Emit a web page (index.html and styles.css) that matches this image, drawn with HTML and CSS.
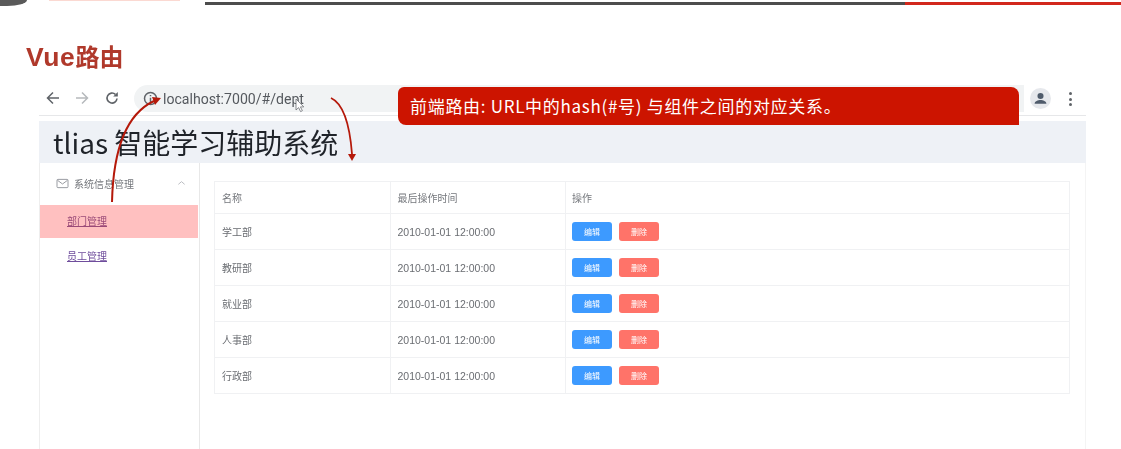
FILE: index.html
```html
<!DOCTYPE html>
<html lang="zh-CN">
<head>
    <meta charset="UTF-8">
    <title>Vue路由</title>
    <link rel="stylesheet" href="styles.css">
</head>
<body>
    <div class="top-strip">
        <div class="logo-stub"></div>
        <div class="logo-text-stub"></div>
        <div class="line-dark"></div>
        <div class="line-red"></div>
    </div>

    <h1 class="slide-title"><span class="title-latin">Vue</span>路由</h1>

    <div class="browser">
        <div class="toolbar">
            <svg class="nav-icon" viewBox="0 0 14 14"><path d="M13 7H2M7 1.5L1.5 7 7 12.5" fill="none" stroke="#5f6368" stroke-width="1.5"/></svg>
            <svg class="nav-icon nav-forward" viewBox="0 0 14 14"><path d="M1 7h11M7 1.5L12.5 7 7 12.5" fill="none" stroke="#b6b9bc" stroke-width="1.5"/></svg>
            <svg class="nav-icon nav-reload" viewBox="0 0 14 14"><path d="M12 7.5A5 5 0 1 1 10.4 3.4" fill="none" stroke="#5f6368" stroke-width="1.6"/><path d="M12.8 1v4.6H8.2z" fill="#5f6368"/></svg>
            <div class="omnibox">
                <svg class="info-icon" viewBox="0 0 14 14"><circle cx="7" cy="7" r="5.6" fill="none" stroke="#5f6368" stroke-width="1.4"/><path d="M7 6.2v4M7 3.8v1.2" stroke="#5f6368" stroke-width="1.4"/></svg>
                <span class="url">localhost:7000/#/dept</span>
            </div>
            <div class="avatar">
                <svg viewBox="0 0 22 22"><circle cx="11" cy="8.4" r="3.2" fill="#4f5b6b"/><path d="M4.8 16.6c0-2.8 3.6-4 6.2-4s6.2 1.2 6.2 4z" fill="#4f5b6b"/></svg>
            </div>
            <div class="kebab"><i></i><i></i><i></i></div>
        </div>

        <div class="app-header">tlias 智能学习辅助系统</div>

        <div class="app-body">
            <aside class="sidebar">
                <div class="menu-title">
                    <svg class="mail-icon" viewBox="0 0 14 12"><rect x="1" y="1.5" width="12" height="9" rx="1" fill="none" stroke="#8f9399"/><path d="M1.5 2.5L7 6.5l5.5-4" fill="none" stroke="#8f9399"/></svg>
                    <span>系统信息管理</span>
                    <svg class="chevron" viewBox="0 0 10 6"><path d="M1.5 4.5L5 1.5l3.5 3" fill="none" stroke="#b4b7bc"/></svg>
                </div>
                <a class="menu-item active" href="#">部门管理</a>
                <a class="menu-item" href="#">员工管理</a>
            </aside>

            <main class="content">
                <table class="dept-table">
                    <thead>
                        <tr><th class="col-name">名称</th><th class="col-time">最后操作时间</th><th>操作</th></tr>
                    </thead>
                    <tbody>
                        <tr>
                            <td>学工部</td><td>2010-01-01 12:00:00</td>
                            <td><div class="actions"><button class="btn btn-edit">编辑</button><button class="btn btn-del">删除</button></div></td>
                        </tr>
                        <tr>
                            <td>教研部</td><td>2010-01-01 12:00:00</td>
                            <td><div class="actions"><button class="btn btn-edit">编辑</button><button class="btn btn-del">删除</button></div></td>
                        </tr>
                        <tr>
                            <td>就业部</td><td>2010-01-01 12:00:00</td>
                            <td><div class="actions"><button class="btn btn-edit">编辑</button><button class="btn btn-del">删除</button></div></td>
                        </tr>
                        <tr>
                            <td>人事部</td><td>2010-01-01 12:00:00</td>
                            <td><div class="actions"><button class="btn btn-edit">编辑</button><button class="btn btn-del">删除</button></div></td>
                        </tr>
                        <tr>
                            <td>行政部</td><td>2010-01-01 12:00:00</td>
                            <td><div class="actions"><button class="btn btn-edit">编辑</button><button class="btn btn-del">删除</button></div></td>
                        </tr>
                    </tbody>
                </table>
            </main>
        </div>
    </div>

    <!-- slide annotations on top of the browser shot -->
    <div class="callout">前端路由: URL中的hash(#号) 与组件之间的对应关系。</div>

    <svg class="annotations" viewBox="0 0 1121 449">
        <path d="M112 202C113 160 122 116 154 101" fill="none" stroke="#b5190a" stroke-width="2"/>
        <path d="M161 98l-9-1 3 8z" fill="#b5190a"/>
        <path d="M331 98C344 104 350 128 352 154" fill="none" stroke="#b5190a" stroke-width="1.8"/>
        <path d="M352 161l-4-7h8z" fill="#b5190a"/>
        <path d="M296 99v11l2.6-2.4 2 4 1.8-.9-2-3.8h3.4z" fill="#fff" stroke="#6d7075" stroke-width=".8"/>
    </svg>
</body>
</html>
```

FILE: styles.css
```css
* {
    box-sizing: border-box;
}

html, body {
    height: 449px;
}

body {
    margin: 0;
    position: relative;
    overflow: hidden;
    background-color: #fff;
    font-family: "Liberation Sans", "Noto Sans CJK SC", sans-serif;
    filter: blur(0.35px); /* source is a soft video frame */
}

/* Slide header strip, cut off by the top of the frame */
.top-strip {
    display: flex;
    height: 6px;
    overflow: hidden;
}

.logo-stub {
    width: 27px;
    height: 6px;
    background-color: #5a5a5a;
    border-radius: 0 0 20px 0 / 0 0 6px 0;
}

.logo-text-stub {
    width: 131px;
    height: 1px;
    margin-left: 22px;
    background-color: #fbd9d2;
}

.line-dark {
    width: 700px;
    height: 3px;
    margin: 2px 0 0 25px;
    background-color: #4d4d4d;
}

.line-red {
    flex: 1;
    height: 3px;
    margin-top: 2px;
    background-color: #d2281c;
}

.slide-title {
    margin: 35px 0 13px 26px;
    height: 31px;
    font-family: "Noto Sans CJK SC", sans-serif;
    font-size: 24px;
    line-height: 30px;
    font-weight: bold;
    color: #b0392b;
}

.title-latin {
    font-family: "Liberation Sans", sans-serif;
    font-size: 26.5px;
    letter-spacing: 0.6px;
}

/* Browser window */
.browser {
    width: 1047px;
    margin-left: 39px;
}

.toolbar {
    display: flex;
    align-items: flex-start;
    height: 31px;
    border-bottom: 1px solid #e6e7e9;
    padding-left: 7px;
}

.nav-icon {
    width: 14px;
    height: 14px;
    margin-top: 6px;
    flex-shrink: 0;
}

.nav-forward {
    margin-left: 15px;
}

.nav-reload {
    margin-left: 16px;
}

.omnibox {
    display: flex;
    align-items: center;
    width: 890px;
    height: 27px;
    margin-left: 15px;
    padding-left: 9px;
    background-color: #f1f3f4;
    border-radius: 14px 0 0 14px;
}

.info-icon {
    width: 15px;
    height: 15px;
}

.url {
    margin-left: 5px;
    font-family: Roboto, sans-serif;
    font-size: 14.1px;
    color: #55595e;
}

.avatar {
    width: 21px;
    height: 21px;
    margin: 3px 0 0 6px;
    border-radius: 50%;
    background-color: #e6e8ec;
}

.avatar svg {
    display: block;
    width: 21px;
    height: 21px;
}

.kebab {
    display: flex;
    flex-direction: column;
    gap: 2.5px;
    margin: 7px 0 0 18px;
}

.kebab i {
    width: 3px;
    height: 3px;
    border-radius: 50%;
    background-color: #5f6368;
}

.app-header {
    height: 42px;
    margin-top: 5px;
    padding-left: 14px;
    background-color: #eef1f6;
    font-family: "Noto Sans CJK SC", sans-serif;
    font-size: 28px;
    line-height: 42px;
    color: #1f2329;
}

.app-body {
    display: flex;
    height: 300px;
    border-left: 1px solid #eeeeee;
    border-right: 1px solid #f4f4f4;
}

/* Sidebar */
.sidebar {
    width: 160px;
    flex-shrink: 0;
    border-right: 1px solid #e8e8e8;
    font-family: "Noto Sans CJK SC", sans-serif;
    font-size: 10px;
}

.menu-title {
    display: flex;
    align-items: center;
    height: 42px;
    padding: 0 0 2px 16px;
    color: #74777c;
}

.mail-icon {
    width: 13px;
    height: 11px;
    margin-right: 5px;
}

.chevron {
    width: 9px;
    height: 6px;
    margin-left: 43px;
}

.menu-item {
    display: block;
    height: 33px;
    padding-left: 27px;
    line-height: 32px;
    color: #6f4d9c;
}

.menu-item.active {
    width: 158px;
    background-color: #ffc0c0;
    color: #9a4a78;
}

.menu-item + .menu-item {
    height: 37px;
    line-height: 36px;
}

/* Table */
.content {
    flex: 1;
    padding: 18px 15px 0 14px;
}

.dept-table {
    width: 856px;
    border-collapse: collapse;
    table-layout: fixed;
    font-size: 10px;
    color: #6a6d72;
}

.dept-table th,
.dept-table td {
    height: 36px;
    padding: 0 7px;
    border: 1px solid #f0f1f3;
    text-align: left;
    font-weight: normal;
}

.dept-table td:nth-child(2) {
    font-size: 10.5px;
}

.dept-table th {
    height: 32px;
    color: #75787d;
}

.col-name,
.col-time {
    width: 175.5px;
}

.dept-table td:last-child,
.dept-table th:last-child {
    padding-left: 6px;
}

.actions {
    display: flex;
    gap: 7px;
}

.btn {
    width: 40px;
    height: 19px;
    padding: 0;
    border: none;
    border-radius: 3px;
    color: #fff;
    font-family: "Noto Sans CJK SC", sans-serif;
    font-size: 8px;
}

.btn-edit {
    background-color: #3d9aff;
}

.btn-del {
    background-color: #ff7369;
}

/* Annotations over the screenshot */
.callout {
    position: absolute;
    left: 398px;
    top: 87px;
    width: 621px;
    height: 38px;
    padding-left: 12px;
    background-color: #cc1400;
    border-radius: 6px 8px 0 8px;
    font-family: "Noto Sans CJK SC", sans-serif;
    font-size: 17px;
    letter-spacing: 0.7px;
    line-height: 37px;
    color: #fff;
}

.annotations {
    position: absolute;
    left: 0;
    top: 0;
    width: 1121px;
    height: 449px;
    pointer-events: none;
}
```
